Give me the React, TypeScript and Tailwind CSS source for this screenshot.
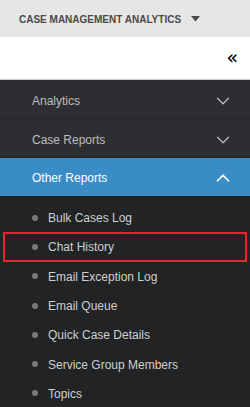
import { ChevronDown, ChevronUp } from 'lucide-react';

const mainItems = [
  { label: 'Analytics', open: false },
  { label: 'Case Reports', open: false },
  { label: 'Other Reports', open: true },
];

const subItems = [
  'Bulk Cases Log',
  'Chat History',
  'Email Exception Log',
  'Email Queue',
  'Quick Case Details',
  'Service Group Members',
  'Topics',
];

export default function App() {
  return (
    <div className="w-[250px] h-[407px] overflow-hidden bg-[#222325] font-['Liberation_Sans',Arial,sans-serif]">
      {/* Header */}
      <div className="h-[37px] bg-[#e6e6e6] flex items-center pl-[19px] gap-[8px] pt-[1px]">
        <span className="text-[10px] font-bold text-[#4a4a4a]">CASE MANAGEMENT ANALYTICS</span>
        <svg width="9" height="6" viewBox="0 0 9 6" className="ml-[2px]">
          <path d="M0 0 L9 0 L4.5 5.5 Z" fill="#4a4a4a" />
        </svg>
      </div>

      {/* Collapse bar */}
      <div className="h-[43px] bg-white flex items-center justify-end pr-[12px] border-b border-[#c9c9c9]">
        <span className="text-[19px] leading-none text-black font-['DejaVu_Sans',sans-serif] -mt-[1px]">«</span>
      </div>

      {/* Main menu */}
      {mainItems.map((item) => (
        <div
          key={item.label}
          className={
            item.open
              ? 'h-[38px] bg-[#3a8cc6] flex items-center justify-between pl-[32px] pr-[16px] pt-[2px]'
              : 'h-[39px] bg-[#2d2e32] flex items-center justify-between pl-[32px] pr-[16px] pt-[3px] border-b border-[#232427]'
          }
        >
          <span className={item.open ? 'text-[12px] text-white' : 'text-[12px] text-[#bdbdbd]'}>
            {item.label}
          </span>
          {item.open ? (
            <ChevronUp className="w-[22px] h-[22px] text-white" strokeWidth={1.9} />
          ) : (
            <ChevronDown className="w-[22px] h-[22px] text-[#bdbdbd]" strokeWidth={1.3} />
          )}
        </div>
      ))}

      {/* Submenu */}
      <div className="pt-[7px]">
        {subItems.map((label) => (
          <div
            key={label}
            className={
              label === 'Chat History'
                ? 'h-[29.3px] mx-[3px] flex items-center pl-[27px] pt-[1px] border-2 border-[#e8252c]'
                : 'h-[29.3px] mx-[3px] flex items-center pl-[27px] pt-[1px] border-2 border-transparent'
            }
          >
            <span className="w-[6px] h-[6px] rounded-full bg-[#7a7a7a] mr-[10px] -mt-[1px]" />
            <span className="text-[12px] text-[#cfcfcf]">{label}</span>
          </div>
        ))}
      </div>
    </div>
  );
}
